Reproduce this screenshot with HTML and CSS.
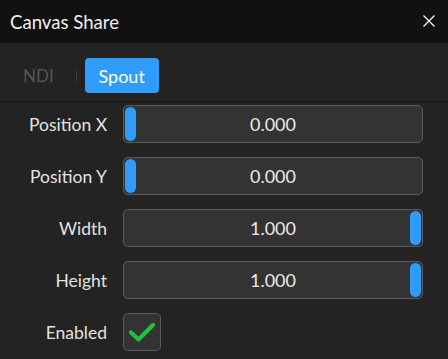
FILE: index.html
```html
<!DOCTYPE html>
<html>
<head>
<meta charset="utf-8">
<link rel="stylesheet" href="styles.css">
</head>
<body>
<div class="dialog">
  <div class="titlebar">
    <span class="title">Canvas Share</span>
    <svg class="close" width="12" height="12" viewBox="0 0 12 12"><path d="M0.5 0.5L11.5 11.5M11.5 0.5L0.5 11.5" stroke="#fff" stroke-width="1.2"/></svg>
  </div>
  <div class="tabs">
    <span class="tab">NDI</span>
    <span class="sep"></span>
    <span class="tab active">Spout</span>
  </div>
  <div class="form">
    <label class="label">Position X</label>
    <div class="slider"><span class="handle" style="left:1px"></span><span class="val">0.000</span></div>
    <label class="label">Position Y</label>
    <div class="slider"><span class="handle" style="left:1px"></span><span class="val">0.000</span></div>
    <label class="label">Width</label>
    <div class="slider"><span class="handle" style="right:1px"></span><span class="val">1.000</span></div>
    <label class="label">Height</label>
    <div class="slider"><span class="handle" style="right:1px"></span><span class="val">1.000</span></div>
    <label class="label">Enabled</label>
    <div class="check"><svg width="28" height="22" viewBox="0 0 28 22"><path d="M3 11.5L10.5 18.5L25 4" fill="none" stroke="#1fc23c" stroke-width="4.2" stroke-linecap="round" stroke-linejoin="round"/></svg></div>
  </div>
</div>
</body>
</html>
```
FILE: styles.css
```css
html, body { margin: 0; padding: 0; }
body {
  background: #232323;
  font-family: "Lato", "Open Sans", sans-serif;
  color: #e0e0e0;
  width: 448px;
  height: 359px;
  overflow: hidden;
}
.titlebar {
  height: 43px;
  background: #111111;
  display: flex;
  align-items: center;
  justify-content: space-between;
  padding: 0 13px 0 10px;
}
.title { font-size: 18.6px; color: #f0f0f0; }
.close { margin-bottom: 2px; }
.tabs {
  height: 59px;
  box-sizing: border-box;
  padding: 15px 0 0 23px;
  display: flex;
  align-items: flex-start;
  border-bottom: 1px solid #181818;
}
.tab {
  height: 35px;
  display: flex;
  align-items: center;
  font-size: 17px;
  color: #555;
}
.sep {
  width: 1px;
  height: 12px;
  background: #3a3a3a;
  margin: 12px 8px 0 22px;
}
.tab.active {
  background: #2f9bfa;
  color: #fff;
  font-size: 18px;
  border-radius: 4px;
  width: 74px;
  box-sizing: border-box;
  justify-content: center;
}
.form {
  display: grid;
  grid-template-columns: 107px 300px;
  column-gap: 16px;
  row-gap: 14px;
  padding-top: 3px;
  align-items: center;
}
.label {
  text-align: right;
  font-size: 17.5px;
  color: #e2e2e2;
}
.slider {
  position: relative;
  height: 38px;
  box-sizing: border-box;
  background: #333;
  border: 1px solid #5a5a5a;
  border-radius: 5px;
  display: flex;
  align-items: center;
  justify-content: center;
}
.handle {
  position: absolute;
  top: 1px;
  bottom: 1px;
  width: 11px;
  background: #2f9bfa;
  border-radius: 6px;
}
.val { font-size: 18px; color: #eaeaea; }
.check {
  width: 38px;
  height: 38px;
  box-sizing: border-box;
  background: #333;
  border: 1px solid #5a5a5a;
  border-radius: 5px;
  display: flex;
  align-items: center;
  justify-content: center;
}
```
